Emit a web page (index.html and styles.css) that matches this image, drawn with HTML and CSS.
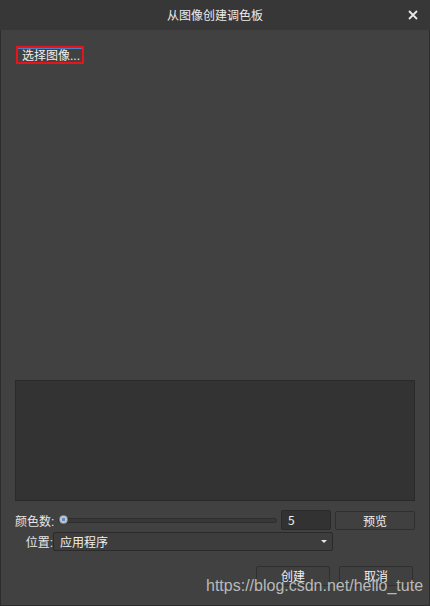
FILE: index.html
```html
<!DOCTYPE html>
<html lang="zh">
<head>
<meta charset="utf-8">
<link rel="stylesheet" href="styles.css">
</head>
<body>
<div class="window">
  <div class="titlebar">
    <span></span>
    <span class="title">从图像创建调色板</span>
    <span class="close">
      <svg width="10" height="10" viewBox="0 0 10 10"><path d="M1 1L9 9M9 1L1 9" stroke="#e8e8e8" stroke-width="1.8"/></svg>
    </span>
  </div>
  <div class="content">
    <div class="top">
      <button class="pick">选择图像<span class="dots">...</span></button>
    </div>
    <div class="preview"></div>
    <div class="form">
      <span class="label">颜色数<span class="colon">:</span></span>
      <div class="row1">
        <div class="slider"><div class="track"></div><div class="thumb"></div></div>
        <div class="num">5</div>
        <button class="btn prev">预览</button>
      </div>
      <span class="label">位置<span class="colon">:</span></span>
      <div class="row2">
        <div class="select"><span>应用程序</span><span class="arrow"></span></div>
      </div>
    </div>
    <div class="actions">
      <button class="btn act">创建</button>
      <button class="btn act">取消</button>
    </div>
  </div>
  <div class="watermark">https://blog.csdn.net/hello_tute</div>
</div>
</body>
</html>
```
FILE: styles.css
```css
html, body { margin: 0; padding: 0; background: #414141; }
body { font-family: "Noto Sans CJK SC", "Noto Sans", sans-serif; font-size: 12px; color: #e6e6e6; }
.window {
  position: relative;
  width: 430px; height: 606px; box-sizing: border-box;
  border: 1px solid #2c2c2c; border-top: none;
  background: #414141;
  display: flex; flex-direction: column;
}
.titlebar {
  height: 30px; background: #373737;
  display: grid; grid-template-columns: 1fr auto 1fr; align-items: center;
  margin: 0 -1px;
}
.title { font-size: 12px; color: #ececec; line-height: 30px; }
.close { justify-self: end; padding-right: 12px; display: flex; }
.content { flex: 1; display: flex; flex-direction: column; padding: 0 14px 0 14px; }
.top { flex: 1; padding-top: 16px; }
.pick {
  font: inherit; font-size: 12px; color: #f0f0f0; line-height: 13px; white-space: nowrap;
  background: #414141; border: 2px solid #e8141c; border-radius: 0;
  box-shadow: inset 0 1px 0 #4a7fc0;
  padding: 0 2px 0 4px; margin-left: 1px; height: 18px; text-align: left;
}
.dots, .colon { font-family: "Liberation Sans", Arial, sans-serif; }
.preview { height: 119px; background: #333333; border: 1px solid #2a2a2a; margin-bottom: 9px; }
.form { display: grid; grid-template-columns: 38px 1fr; row-gap: 2px; align-items: center; }
.label { text-align: right; color: #e6e6e6; white-space: nowrap; }
.row1 { display: flex; align-items: center; }
.slider { position: relative; width: 219px; height: 20px; margin-left: 5px; display: flex; align-items: center; }
.track { width: 100%; height: 3px; background: #383838; border: 1px solid #2e2e2e; border-radius: 3px; }
.thumb {
  position: absolute; left: 1px; top: 5px; width: 9px; height: 9px; border-radius: 50%;
  background: radial-gradient(circle, #5a8ad0 0 1.5px, #c6c6c6 2px);
  border: 0.5px solid #9a9a9a; box-sizing: border-box;
}
.num {
  width: 50px; height: 20px; box-sizing: border-box; margin-left: 4px;
  background: #323232; border: 1px solid #2a2a2a; border-radius: 2px;
  padding-left: 6px; line-height: 18px; color: #f0f0f0;
}
.btn {
  font: inherit; font-size: 12px; color: #f0f0f0;
  background: #404040; border: 1px solid #2f2f2f; border-radius: 2px;
  padding: 0; box-sizing: border-box;
}
.prev { width: 80px; height: 19px; margin-left: 4px; line-height: 17px; }
.row2 { display: flex; }
.select {
  width: 280px; height: 19px; box-sizing: border-box;
  background: #3d3d3d; border: 1px solid #2a2a2a; border-radius: 2px;
  display: flex; align-items: center; justify-content: space-between; padding: 0 5px 0 6px;
  color: #f0f0f0;
}
.arrow { width: 0; height: 0; border-left: 3px solid transparent; border-right: 3px solid transparent; border-top: 3px solid #e6e6e6; }
.actions { display: flex; justify-content: flex-end; gap: 9px; padding: 15px 2px 19px 0; }
.act { width: 74px; height: 20px; line-height: 18px; }
.watermark {
  position: absolute; left: 205px; top: 577px;
  font-family: "Liberation Sans", Arial, sans-serif; font-size: 16px; color: #b9b9b9;
  white-space: nowrap; pointer-events: none;
}
```
